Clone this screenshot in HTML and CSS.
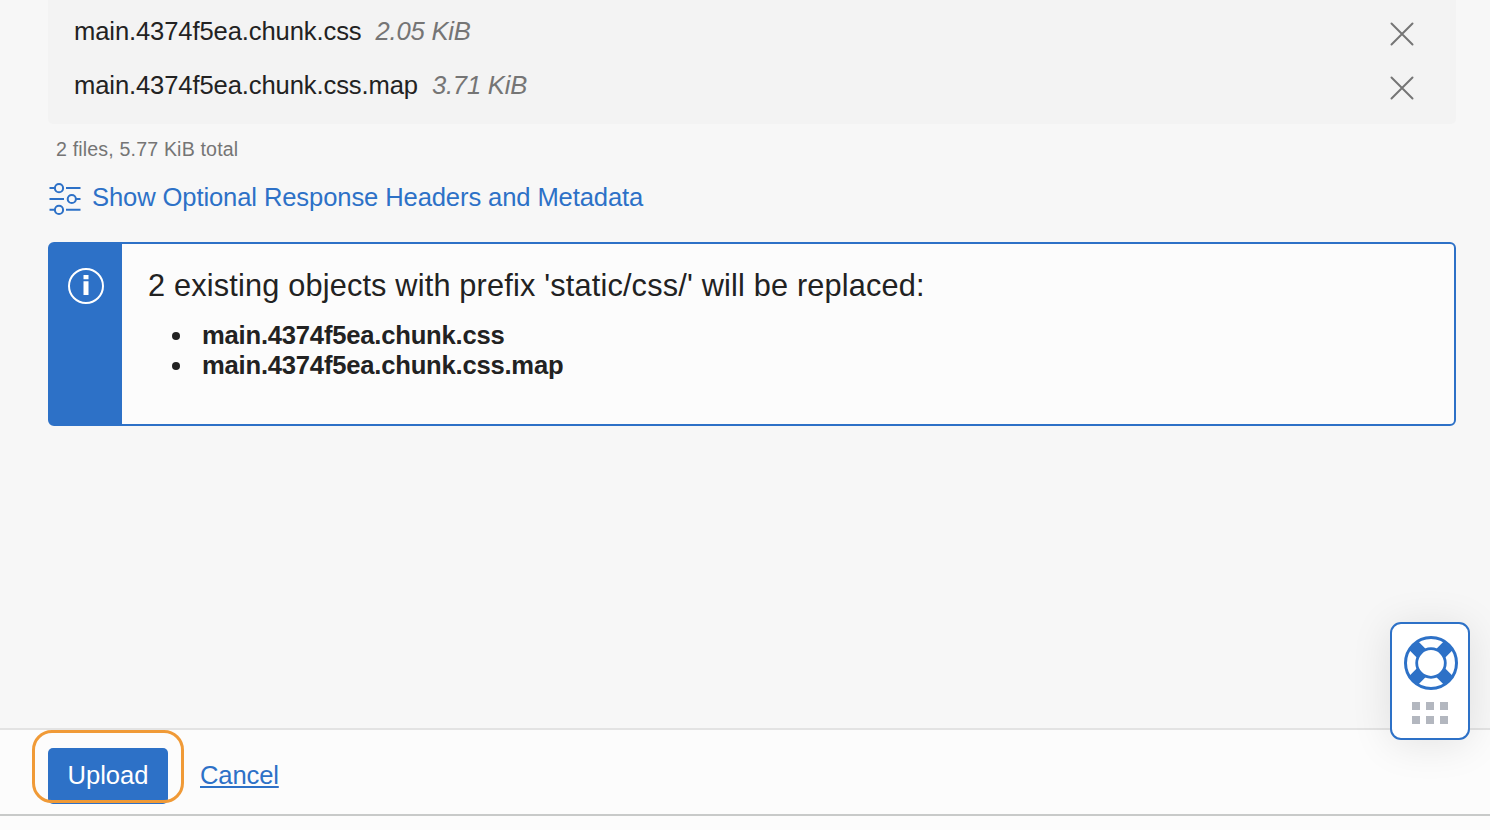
FILE: index.html
```
<!DOCTYPE html>
<html lang="en">
<head>
<meta charset="utf-8">
<title>Upload Objects</title>
<link rel="stylesheet" href="styles.css">
</head>
<body>
<div class="panel">
  <main class="content">
    <ul class="files">
      <li class="file">
        <span class="file-name">main.4374f5ea.chunk.css</span>
        <span class="file-size">2.05 KiB</span>
        <svg class="remove" viewBox="0 0 24 24"><path d="M1.500 1.500L22.500 22.500M22.500 1.500L1.500 22.500"/></svg>
      </li>
      <li class="file">
        <span class="file-name">main.4374f5ea.chunk.css.map</span>
        <span class="file-size">3.71 KiB</span>
        <svg class="remove" viewBox="0 0 24 24"><path d="M1.500 1.500L22.500 22.500M22.500 1.500L1.500 22.500"/></svg>
      </li>
    </ul>
    <p class="summary">2 files, 5.77 KiB total</p>
    <a class="options">
      <svg class="sliders" viewBox="0 0 32 32"><path d="M.5 5H6M17 5H31.500M.5 16H15M27 16H31.500M.5 26.700H6M17 26.700H31.500"/><circle cx="10" cy="5.200" r="4.100"/><circle cx="22.800" cy="16" r="4.100"/><circle cx="10" cy="26.900" r="4.100"/></svg>
      <span>Show Optional Response Headers and Metadata</span>
    </a>
    <section class="notice">
      <div class="notice-side">
        <svg class="info" viewBox="0 0 36 36"><circle cx="18" cy="18" r="17"/><path d="M15.500 7h5v4.300h-5zM15.500 13.300h5v13.700h-5z"/></svg>
      </div>
      <div class="notice-body">
        <h2 class="notice-title">2 existing objects with prefix 'static/css/' will be replaced:</h2>
        <ul class="replaced">
          <li><span>main.4374f5ea.chunk.css</span></li>
          <li><span>main.4374f5ea.chunk.css.map</span></li>
        </ul>
      </div>
    </section>
  </main>
  <footer class="actions">
    <button class="upload"><span>Upload</span></button>
    <a class="cancel">Cancel</a>
    <div class="highlight"></div>
  </footer>
  <div class="page-end"></div>
  <aside class="help">
    <svg class="lifebuoy" viewBox="0 0 54 54">
      <circle class="ring" cx="27" cy="27" r="25.500"/>
      <g class="bands"><path d="M27 2.500V13M27 41V51.500M2.500 27H13M41 27H51.500" transform="rotate(45 27 27)"/></g>
      <circle class="hole" cx="27" cy="27" r="14.300"/>
    </svg>
    <div class="grip"><i></i><i></i><i></i><i></i><i></i><i></i></div>
  </aside>
</div>
</body>
</html>
```
FILE: styles.css
```
* { box-sizing: border-box; }
body {
  margin: 0;
  background: #f7f7f7;
  color: #222;
  font-family: "Liberation Sans", Arial, sans-serif;
  font-size: 25.6px;
  line-height: 30px;
}
.panel {
  position: relative;
  height: 830px;
  display: flex;
  flex-direction: column;
  overflow: hidden;
}
.content { flex: 1; padding: 0 34px 0 48px; }
.files {
  margin: 0;
  padding: 5px 40px 12px 26px;
  height: 124px;
  list-style: none;
  background: #f3f3f3;
  border-radius: 0 0 5px 5px;
}
.file { display: flex; height: 54px; padding-top: 11px; }
.file-name { letter-spacing: -.12px; }
.file-size { margin-left: 14px; color: #757575; font-style: italic; letter-spacing: -.2px; }
.remove {
  width: 24px;
  height: 24px;
  margin: 6px 2px 0 auto;
  fill: none;
  stroke: #757575;
  stroke-width: 2;
  stroke-linecap: round;
}
.summary {
  margin: 12px 0 0 8px;
  color: #757575;
  font-size: 19.6px;
  line-height: 27px;
  letter-spacing: .16px;
}
.options {
  display: flex;
  width: max-content;
  margin-top: 19px;
  color: #2d71c7;
  letter-spacing: -.12px;
}
.sliders {
  width: 32px;
  height: 32px;
  margin: 1px 11px 0 1px;
  fill: none;
  stroke: #2d71c7;
  stroke-width: 2;
}
.notice {
  display: flex;
  height: 184px;
  margin-top: 27px;
  border: 2px solid #2d71c7;
  border-radius: 6px;
  background: #fcfcfc;
}
.notice-side { width: 72px; padding: 24px 18px; background: #2d71c7; }
.info { display: block; width: 36px; height: 36px; fill: #fff; }
.info circle { fill: none; stroke: #fff; stroke-width: 2; }
.notice-body { padding: 24px 26px; }
.notice-title {
  margin: 0;
  font-size: 30.7px;
  line-height: 36px;
  font-weight: 400;
  letter-spacing: .18px;
}
.replaced { margin: 17px 0 0; padding: 0; list-style: none; font-weight: 700; letter-spacing: -.21px; }
.replaced li { display: flex; align-items: center; height: 30px; }
.replaced li span { margin-top: -2px; }
.replaced li::before {
  content: "";
  width: 8px;
  height: 8px;
  margin: 0 22px 0 24px;
  border-radius: 50%;
  background: #222;
}
.actions {
  position: relative;
  display: flex;
  height: 88px;
  padding: 18px 48px 0;
  border-top: 2px solid #e3e3e3;
  border-bottom: 2px solid #c8cac9;
  background: #fcfcfc;
}
.upload {
  width: 120px;
  height: 56px;
  padding: 0 0 2px;
  border: 0;
  border-radius: 5px;
  background: #2d71c7;
  color: #fff;
  font: 25.6px/30px "Liberation Sans", Arial, sans-serif;
}
.cancel {
  margin: 12px 0 0 32px;
  color: #2d71c7;
  letter-spacing: -.15px;
  text-decoration: underline;
  text-decoration-thickness: 2px;
  text-underline-offset: 2px;
}
.highlight {
  position: absolute;
  left: 31.5px;
  top: -.5px;
  width: 152px;
  height: 73px;
  border: 3px solid #f09a37;
  border-radius: 20px;
}
.page-end { height: 14px; background: #fcfcfc; }
.help {
  position: absolute;
  right: 20px;
  top: 622px;
  width: 80px;
  height: 118px;
  padding: 12px;
  border: 2px solid #2d71c7;
  border-radius: 11px;
  background: #fff;
  box-shadow: 0 4px 40px rgba(0, 0, 0, .1);
}
.lifebuoy { display: block; width: 54px; height: 54px; fill: none; stroke: #2d71c7; }
.ring { stroke-width: 3; }
.bands { stroke-width: 12.5; }
.hole { fill: #fff; stroke-width: 2.8; }
.grip {
  display: grid;
  grid-template-columns: repeat(3, 8px);
  gap: 6px;
  margin: 12px 0 0 8px;
}
.grip i { height: 8px; background: #b3b7bf; }
```
